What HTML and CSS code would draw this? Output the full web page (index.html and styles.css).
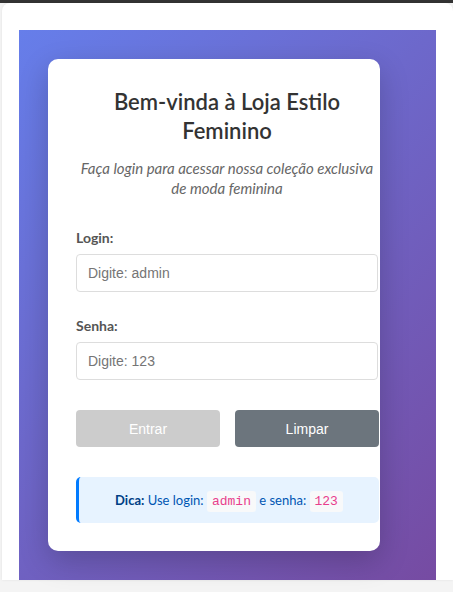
FILE: index.html
```html
<!DOCTYPE html>
<html lang="pt-BR">
<head>
<meta charset="utf-8">
<title>Loja Estilo Feminino</title>
<link rel="stylesheet" href="styles.css">
</head>
<body>
<div class="topbar"></div>
<div class="panel">
  <div class="stage">
    <div class="card">
      <h2 class="title">Bem-vinda à Loja Estilo Feminino</h2>
      <p class="subtitle">Faça login para acessar nossa coleção exclusiva de moda feminina</p>
      <div class="field">
        <label class="label" for="login">Login:</label>
        <input class="input" id="login" type="text" placeholder="Digite: admin">
      </div>
      <div class="field">
        <label class="label" for="senha">Senha:</label>
        <input class="input" id="senha" type="password" placeholder="Digite: 123">
      </div>
      <div class="actions">
        <button class="btn btn-disabled" type="button">Entrar</button>
        <button class="btn btn-secondary" type="button">Limpar</button>
      </div>
      <div class="hint">
        <p class="hint-text"><strong>Dica:</strong> Use login: <code class="code">admin</code> e senha: <code class="code">123</code></p>
      </div>
    </div>
  </div>
</div>
</body>
</html>
```
FILE: styles.css
```css
html, body {
  margin: 0;
  padding: 0;
}
body {
  background: #f4f4f4;
  font-family: Lato, "Open Sans", sans-serif;
  height: 592px;
  overflow: hidden;
}
.topbar {
  height: 3px;
  background: #333;
}
.panel {
  margin-left: 2px;
  background: #fff;
  border-radius: 8px 8px 0 0;
  padding: 27px 17px 0 17px;
  box-shadow: 0 0 3px rgba(0,0,0,0.08);
}
.stage {
  height: 550px;
  box-sizing: border-box;
  padding: 29px 0 0 29px;
  background: linear-gradient(135deg, #667eea 0%, #764ba2 100%);
}
.card {
  width: 332px;
  height: 492px;
  box-sizing: border-box;
  padding: 28px 2px 0 28px;
  background: #fff;
  border-radius: 10px;
  box-shadow: 0 10px 30px rgba(0,0,0,0.2);
}
.title {
  margin: 0;
  font-size: 22px;
  line-height: 29px;
  font-weight: 600;
  color: #333;
  text-align: center;
}
.subtitle {
  margin: 13px 0 0 0;
  font-size: 15px;
  line-height: 20px;
  font-style: italic;
  color: #666;
  text-align: center;
}
.field {
  display: flex;
  flex-direction: column;
  margin-top: 30px;
}
.field + .field {
  margin-top: 24px;
}
.label {
  font-size: 14px;
  line-height: 19px;
  font-weight: bold;
  color: #555;
  margin-bottom: 7px;
}
.input {
  width: 302px;
  height: 38px;
  box-sizing: border-box;
  padding: 0 11px;
  border: 1px solid #ddd;
  border-radius: 4px;
  font-family: "Liberation Sans", Arial, sans-serif;
  font-size: 14px;
  color: #333;
  outline: none;
}
.input::placeholder {
  color: #757575;
}
.actions {
  display: flex;
  gap: 15px;
  width: 303px;
  margin-top: 30px;
}
.btn {
  flex: 1;
  height: 37px;
  border: none;
  border-radius: 4px;
  color: #fff;
  font-family: "Liberation Sans", Arial, sans-serif;
  font-size: 14px;
}
.btn-disabled {
  background: #ccc;
}
.btn-secondary {
  background: #6c757d;
}
.hint {
  margin-top: 30px;
  width: 303px;
  height: 46px;
  box-sizing: border-box;
  display: flex;
  align-items: center;
  justify-content: center;
  background: #e7f3ff;
  border-left: 3px solid #007bff;
  border-radius: 5px;
}
.hint-text {
  margin: 0;
  font-size: 13px;
  color: #0056b3;
}
.hint-text strong {
  color: #004085;
}
.code {
  font-family: "Liberation Mono", "Courier New", monospace;
  font-size: 13px;
  color: #e83e8c;
  background: #f8f9fa;
  padding: 3px 5px;
  border-radius: 3px;
}
```
